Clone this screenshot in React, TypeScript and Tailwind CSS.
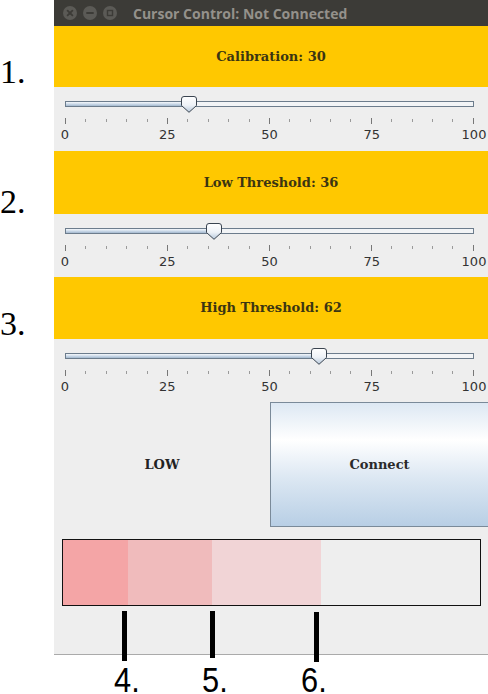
import React from "react";

const sections = [
  { label: "Calibration", value: 30, yh: "h-[61px]", sh: "h-[64px]" },
  { label: "Low Threshold", value: 36, yh: "h-[63px]", sh: "h-[63px]" },
  { label: "High Threshold", value: 62, yh: "h-[62px]", sh: "h-[63px]" },
];

function Thumb() {
  return (
    <svg width="16" height="17" viewBox="0 0 16 17">
      <defs>
        <linearGradient id="thumbGrad" x1="0" y1="0" x2="0" y2="1">
          <stop offset="0" stopColor="#ffffff" />
          <stop offset="0.55" stopColor="#eef2f7" />
          <stop offset="1" stopColor="#b6c8db" />
        </linearGradient>
      </defs>
      <path
        d="M0.5 3 Q0.5 0.5 3 0.5 H13 Q15.5 0.5 15.5 3 V9.5 L8 16.3 L0.5 9.5 Z"
        fill="url(#thumbGrad)"
        stroke="#3a4450"
        strokeWidth="1"
      />
    </svg>
  );
}

function Slider({ value, h }: { value: number; h: string }) {
  const ticks = Array.from({ length: 21 }, (_, i) => i);
  const labels = ["0", "25", "50", "75", "100"];
  return (
    <div className={`${h} pt-[14px] bg-[#eeeeee]`}>
      <div className="ml-[11px] w-[409px]">
        <div className="relative h-[6px] border border-[#6c7c8c] bg-[#f2f4f6]">
          <div
            className="h-full bg-gradient-to-b from-[#f5f8fb] via-[#cddbea] to-[#a3b8ce]"
            style={{ width: `${value}%` }}
          />
          <div className="absolute top-[-6px]" style={{ left: `calc(${value}% - 7px)` }}>
            <Thumb />
          </div>
        </div>
        <div className="mt-[11px] h-[6px] flex justify-between items-start">
          {ticks.map((i) =>
            i % 5 === 0 ? (
              <div key={i} className="w-px h-[6px] bg-[#777777]" />
            ) : (
              <div key={i} className="w-px h-[3px] mt-[1px] bg-[#9a9a9a]" />
            )
          )}
        </div>
        <div className="mt-[4px] flex justify-between text-[13px] leading-[13px] text-[#333333] font-['DejaVu_Sans',sans-serif]">
          {labels.map((l) => (
            <div key={l} className="w-0 flex justify-center">
              <span className="whitespace-nowrap">{l}</span>
            </div>
          ))}
        </div>
      </div>
    </div>
  );
}

function TitleButton({ kind }: { kind: "close" | "min" | "max" }) {
  return (
    <svg width="14" height="14" viewBox="0 0 14 14">
      <circle cx="7" cy="7" r="7" fill="#5b5a56" />
      {kind === "close" && (
        <path d="M4.6 4.6 L9.4 9.4 M9.4 4.6 L4.6 9.4" stroke="#3c3b37" strokeWidth="1.8" strokeLinecap="round" />
      )}
      {kind === "min" && <path d="M4 7 H10" stroke="#3c3b37" strokeWidth="1.8" strokeLinecap="round" />}
      {kind === "max" && <rect x="4.5" y="4.5" width="5" height="5" fill="none" stroke="#3c3b37" strokeWidth="1.4" />}
    </svg>
  );
}

export default function App() {
  return (
    <div className="relative w-[488px] h-[694px] bg-white overflow-hidden flex">
      <div className="w-[54px] shrink-0" />
      <div className="w-[434px] h-[655px] flex flex-col bg-[#eeeeee] border-b border-[#aaaaaa]">
        <div className="h-[26px] shrink-0 bg-[#3c3b37] flex items-center pl-[9px]">
          <div className="flex gap-[6px]">
            <TitleButton kind="close" />
            <TitleButton kind="min" />
            <TitleButton kind="max" />
          </div>
          <span className="ml-[16px] text-[14px] font-bold text-[#94918b] font-['Open_Sans',sans-serif] whitespace-nowrap">
            Cursor Control: Not Connected
          </span>
        </div>

        {sections.map((s) => (
          <React.Fragment key={s.label}>
            <div
              className={`${s.yh} shrink-0 bg-[#ffc800] flex items-center justify-center text-[13px] font-bold text-[#3b3512] font-['DejaVu_Serif',serif]`}
            >
              {s.label}: {s.value}
            </div>
            <Slider value={s.value} h={s.sh} />
          </React.Fragment>
        ))}

        <div className="h-[125px] shrink-0 flex">
          <div className="w-[216px] flex items-center justify-center text-[13px] font-bold text-[#222222] font-['DejaVu_Serif',serif]">
            LOW
          </div>
          <div className="flex-1 flex items-center justify-center border-y border-l border-[#7a8a99] bg-[linear-gradient(to_bottom,#dde8f3_0%,#ffffff_30%,#dde8f3_60%,#b8cfe5_100%)] text-[13px] font-bold text-[#2a2a2a] font-['DejaVu_Serif',serif]">
            Connect
          </div>
        </div>

        <div className="mt-[12px] ml-[8px] mr-[7px] h-[67px] border border-[#111111] flex">
          <div className="w-[65px] bg-[#f4a5a6]" />
          <div className="w-[84px] bg-[#f0bbbc]" />
          <div className="w-[109px] bg-[#f1d4d6]" />
          <div className="flex-1 bg-[#eeeeee]" />
        </div>
      </div>

      {/* annotations */}
      <div className="absolute left-0 top-[55px] text-[34px] leading-[34px] text-black font-['Liberation_Serif','DejaVu_Serif',serif]">1.</div>
      <div className="absolute left-0 top-[185px] text-[34px] leading-[34px] text-black font-['Liberation_Serif','DejaVu_Serif',serif]">2.</div>
      <div className="absolute left-0 top-[307px] text-[34px] leading-[34px] text-black font-['Liberation_Serif','DejaVu_Serif',serif]">3.</div>

      <div className="absolute left-[122px] top-[611px] w-[5px] h-[50px] bg-black" />
      <div className="absolute left-[210px] top-[611px] w-[5px] h-[47px] bg-black" />
      <div className="absolute left-[314px] top-[612px] w-[5px] h-[50px] bg-black" />

      <div className="absolute left-[114px] top-[667px] text-[35px] leading-[26px] text-black font-['Liberation_Sans',sans-serif] scale-x-[0.88] origin-left">4.</div>
      <div className="absolute left-[202px] top-[667px] text-[35px] leading-[26px] text-black font-['Liberation_Sans',sans-serif] scale-x-[0.88] origin-left">5.</div>
      <div className="absolute left-[301px] top-[667px] text-[35px] leading-[26px] text-black font-['Liberation_Sans',sans-serif] scale-x-[0.88] origin-left">6.</div>
    </div>
  );
}
